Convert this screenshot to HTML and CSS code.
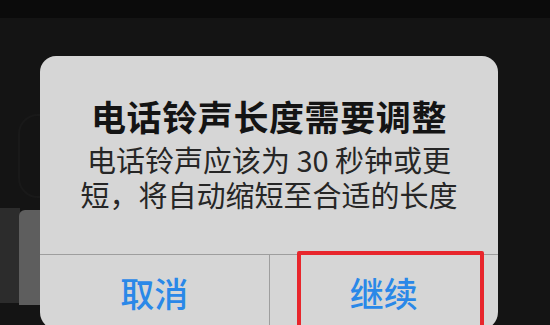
FILE: index.html
```html
<!DOCTYPE html>
<html lang="zh-CN">
<head>
<meta charset="utf-8">
<title>电话铃声长度需要调整</title>
<link rel="stylesheet" href="styles.css">
</head>
<body>
<div class="screen">
  <div class="topbar"></div>
  <div class="stage">
    <div class="bg-ring"></div>
    <div class="bg-shape bg-dark"></div>
    <div class="bg-shape bg-light"></div>
    <div class="alert">
      <div class="alert-body">
        <h1 class="alert-title">电话铃声长度需要调整</h1>
        <p class="alert-msg"><span class="msg-line">电话铃声应该为 30 秒钟或更</span><span class="msg-line">短，将自动缩短至合适的长度</span></p>
      </div>
      <div class="alert-actions">
        <button class="alert-btn">取消</button>
        <button class="alert-btn btn-marked">继续<span class="mark"></span></button>
      </div>
    </div>
  </div>
</div>
</body>
</html>
```

FILE: styles.css
```css
html, body {
  margin: 0;
  padding: 0;
  background: #141414;
}

.screen {
  width: 550px;
  height: 325px;
  overflow: hidden;
  background: #141414;
  font-family: "Noto Sans CJK SC", "Noto Sans", sans-serif;
}

.topbar {
  height: 18px;
  background: #0b0b0b;
}

.stage {
  position: relative;
  height: 307px;
  padding: 38px 0 0 40px;
  box-sizing: border-box;
}

.bg-ring {
  position: absolute;
  left: 18px;
  top: 96px;
  width: 40px;
  height: 80px;
  border-radius: 20px;
  border: 2px solid #191919;
}

.bg-shape {
  position: absolute;
}

.bg-dark {
  left: 0;
  top: 190px;
  width: 20px;
  height: 95px;
  background: #2c2c2c;
}

.bg-light {
  left: 19px;
  top: 192px;
  width: 24px;
  height: 95px;
  background: #5e5e5e;
  border-radius: 6px 0 0 0;
}

.alert {
  position: relative;
  width: 458px;
  height: 274px;
  background: #d6d6d6;
  border-radius: 16px 16px 18px 18px;
  display: flex;
  flex-direction: column;
}

.alert-body {
  padding: 40px 0 0;
  height: 199px;
  box-sizing: border-box;
  text-align: center;
  border-bottom: 1px solid #9e9e9e;
}

.alert-title {
  margin: 0;
  font-size: 35px;
  line-height: 40px;
  font-weight: 700;
  color: #141414;
  letter-spacing: 0.6px;
}

.alert-msg {
  margin: 6px 0 0;
  font-size: 29px;
  line-height: 35px;
  font-weight: 400;
  color: #262626;
  display: flex;
  flex-direction: column;
  align-items: center;
}

.msg-line {
  display: block;
  height: 35px;
}

.alert-actions {
  flex: 1;
  display: flex;
}

.alert-btn {
  position: relative;
  flex: 1;
  border: 0;
  margin: 0;
  padding: 0;
  background: transparent;
  font-family: inherit;
  font-size: 34px;
  font-weight: 500;
  color: #2a88e8;
  line-height: 40px;
}

.alert-btn + .alert-btn {
  border-left: 1px solid #9e9e9e;
}

.mark {
  position: absolute;
  left: 27px;
  top: -4px;
  width: 179px;
  height: 120px;
  border: 4px solid #e8262c;
  border-radius: 2px;
}
```
